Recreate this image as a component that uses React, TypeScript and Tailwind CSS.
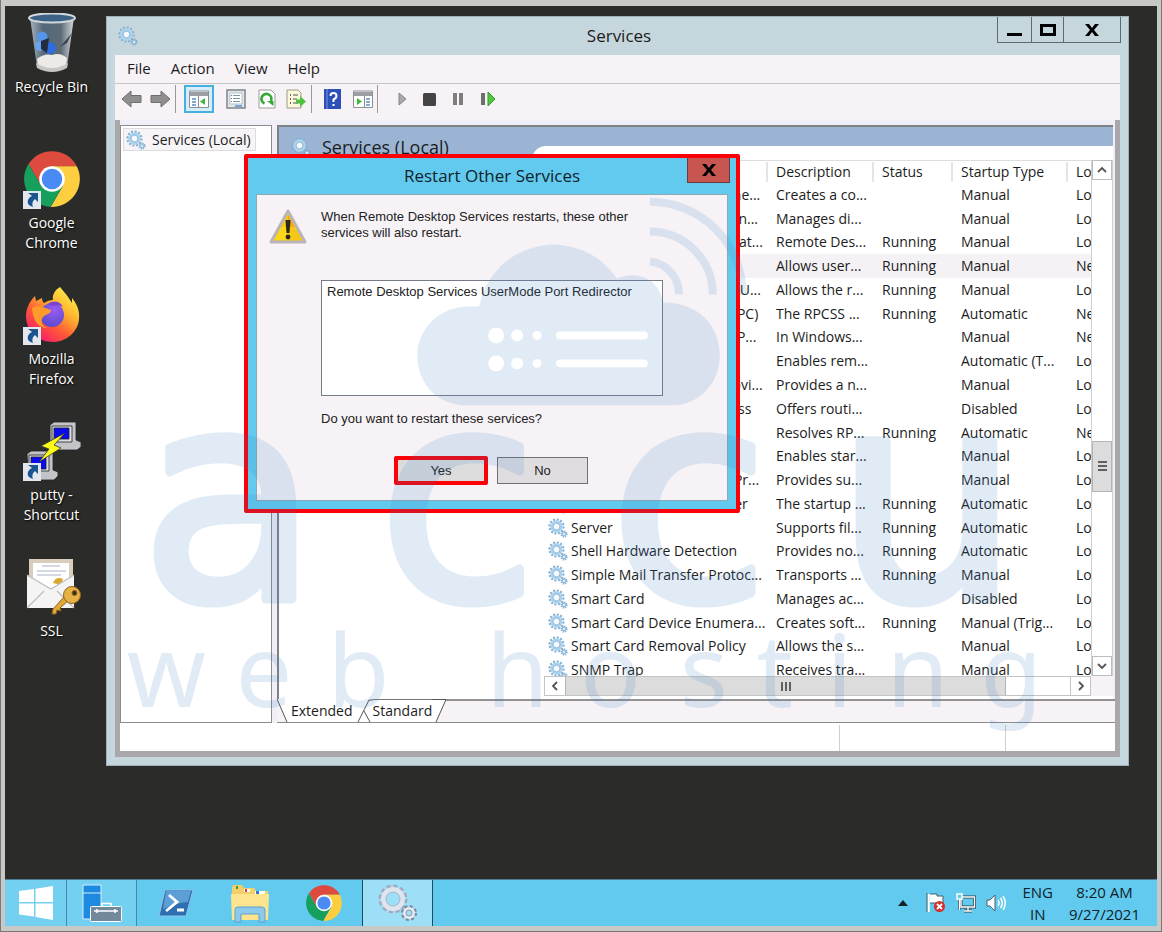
// Windows Server desktop with the Services console and the restart confirmation dialog

import React from 'react';

type ServiceRow = {
  name: string;
  description: string;
  status?: string;
  startup: string;
  logOn: string;
  selected?: boolean;
};

const services: ServiceRow[] = [
  { name: 'Remote Access Auto Conne...', description: 'Creates a co...', startup: 'Manual', logOn: 'Lo' },
  { name: 'Remote Access Connection...', description: 'Manages di...', startup: 'Manual', logOn: 'Lo' },
  { name: 'Remote Desktop Configurat...', description: 'Remote Des...', status: 'Running', startup: 'Manual', logOn: 'Lo' },
  { name: 'Remote Desktop Services', description: 'Allows user...', status: 'Running', startup: 'Manual', logOn: 'Ne', selected: true },
  { name: 'Remote Desktop Services U...', description: 'Allows the r...', status: 'Running', startup: 'Manual', logOn: 'Lo' },
  { name: 'Remote Procedure Call (RPC)', description: 'The RPCSS ...', status: 'Running', startup: 'Automatic', logOn: 'Ne' },
  { name: 'Remote Procedure Call (RP...', description: 'In Windows...', startup: 'Manual', logOn: 'Ne' },
  { name: 'Remote Registry', description: 'Enables rem...', startup: 'Automatic (T...', logOn: 'Lo' },
  { name: 'Resultant Set of Policy Provi...', description: 'Provides a n...', startup: 'Manual', logOn: 'Lo' },
  { name: 'Routing and Remote Access', description: 'Offers routi...', startup: 'Disabled', logOn: 'Lo' },
  { name: 'RPC Endpoint Mapper', description: 'Resolves RP...', status: 'Running', startup: 'Automatic', logOn: 'Ne' },
  { name: 'Secondary Logon', description: 'Enables star...', startup: 'Manual', logOn: 'Lo' },
  { name: 'Secure Socket Tunneling Pr...', description: 'Provides su...', startup: 'Manual', logOn: 'Lo' },
  { name: 'Security Accounts Manager', description: 'The startup ...', status: 'Running', startup: 'Automatic', logOn: 'Lo' },
  { name: 'Server', description: 'Supports fil...', status: 'Running', startup: 'Automatic', logOn: 'Lo' },
  { name: 'Shell Hardware Detection', description: 'Provides no...', status: 'Running', startup: 'Automatic', logOn: 'Lo' },
  { name: 'Simple Mail Transfer Protoc...', description: 'Transports ...', status: 'Running', startup: 'Manual', logOn: 'Lo' },
  { name: 'Smart Card', description: 'Manages ac...', startup: 'Disabled', logOn: 'Lo' },
  { name: 'Smart Card Device Enumera...', description: 'Creates soft...', status: 'Running', startup: 'Manual (Trig...', logOn: 'Lo' },
  { name: 'Smart Card Removal Policy', description: 'Allows the s...', startup: 'Manual', logOn: 'Lo' },
  { name: 'SNMP Trap', description: 'Receives tra...', startup: 'Manual', logOn: 'Lo' },
];

function GearIcon({ className = '' }: { className?: string }) {
  return (
    <svg viewBox="0 0 20 20" className={className} aria-hidden="true">
      <circle cx="8.5" cy="8.5" r="7" fill="none" stroke="#86afd0" strokeWidth="2.2" strokeDasharray="2 1.66" />
      <circle cx="8.5" cy="8.5" r="4.9" fill="none" stroke="#a9d3ee" strokeWidth="2.8" />
      <circle cx="8.5" cy="8.5" r="3.4" fill="#f4fafd" stroke="#7fa6c6" strokeWidth=".8" />
      <circle cx="16" cy="16" r="2.8" fill="none" stroke="#7ea4c4" strokeWidth="1.6" strokeDasharray="1.2 1" />
      <circle cx="16" cy="16" r="1.7" fill="#e6f3fa" stroke="#91bfe0" strokeWidth="1.2" />
    </svg>
  );
}

function ChromeIcon({ className = '' }: { className?: string }) {
  const sector = 'M24 13H45.3A24 24 0 0 0 3.9 11.1L14.5 29.5L24 24Z';
  return (
    <svg viewBox="0 0 48 48" className={className} aria-hidden="true">
      <path d={sector} fill="#dd4b3e" />
      <path d={sector} fill="#fdce3f" transform="rotate(120 24 24)" />
      <path d={sector} fill="#17a05d" transform="rotate(240 24 24)" />
      <circle cx="24" cy="24" r="11" fill="#fff" />
      <circle cx="24" cy="24" r="8.8" fill="#4a8af4" />
    </svg>
  );
}

function FirefoxIcon() {
  return (
    <svg viewBox="0 0 56 58" className="h-[58px] w-14" aria-hidden="true">
      <defs>
        <linearGradient id="ffBody" x1="0.85" y1="0.05" x2="0.2" y2="0.95">
          <stop offset="0" stopColor="#fff04a" />
          <stop offset=".35" stopColor="#ffb52e" />
          <stop offset=".65" stopColor="#ff5b35" />
          <stop offset="1" stopColor="#f5186d" />
        </linearGradient>
        <radialGradient id="ffGlobe" cx=".6" cy=".3" r=".8">
          <stop offset="0" stopColor="#9a5cf0" />
          <stop offset="1" stopColor="#5249c9" />
        </radialGradient>
      </defs>
      <path
        d="M36 1C40 6 43 9 46 14L48 17L48 12C53 18 56 25 55 33C54 46 42 56 29 56C14 56 2 45 2 30C2 23 5 16 11 10L12 15L18 12C18 15 19 16 20 17C23 15 26 14 29 14C28 9 31 4 36 1Z"
        fill="url(#ffBody)"
      />
      <circle cx="28" cy="29" r="12" fill="url(#ffGlobe)" />
      <path d="M8 22C14 18 20 22 27 24C27 28 22 28 19 31C16 35 18 40 23 42C14 42 9 34 8 22Z" fill="#ff9a2c" />
      <path d="M24 18C29 14 36 15 39 21C35 19 32 19 29 20Z" fill="#7b42d4" />
    </svg>
  );
}

function RecycleBinIcon() {
  return (
    <svg viewBox="0 0 56 60" className="h-[60px] w-14" aria-hidden="true">
      <defs>
        <linearGradient id="binGlass" x1="0" x2="1">
          <stop offset="0" stopColor="#a9b4bd" />
          <stop offset=".3" stopColor="#53687a" />
          <stop offset=".7" stopColor="#5d6b76" />
          <stop offset="1" stopColor="#d7dadc" />
        </linearGradient>
      </defs>
      <path d="M6 4L13 54Q28 62 43 54L50 4Z" fill="url(#binGlass)" />
      <ellipse cx="28" cy="5" rx="23" ry="4.5" fill="#3c6285" stroke="#d3d8db" strokeWidth="2" />
      <path d="M48 20L36 34L43 30Z" fill="#3b444c" />
      <g fill="#2f6be0">
        <circle cx="18" cy="24" r="5.5" fill="#5595e8" />
        <circle cx="16" cy="33" r="5" fill="#6aa3ee" />
        <circle cx="26" cy="35" r="6" />
      </g>
      <path d="M17 28L25 25L23 40L17 36Z" fill="#232d3d" />
      <path d="M13 46Q20 40 28 42Q36 39 43 45L42 54Q28 61 14 54Z" fill="#eceae6" />
      <path d="M12 50L13 55Q28 63 43 55L44 50Q28 60 12 50Z" fill="#c8c6c2" />
    </svg>
  );
}

function PuttyIcon() {
  return (
    <svg viewBox="0 0 58 60" className="h-[60px] w-[58px]" aria-hidden="true">
      <g stroke="#222" strokeWidth=".8">
        <path d="M27 4L31 1H53V19L58 21V26L54 29H29L27 24Z" fill="#c4c4c8" />
        <path d="M29 5H49V21H29Z" fill="#dcdce0" />
        <path d="M31 7H46V18H31Z" fill="#0b0bf0" />
        <path d="M4 33L8 30H30V49L35 51V55L31 59H6Z" fill="#c4c4c8" />
        <path d="M6 34H26V50H6Z" fill="#dcdce0" />
        <path d="M8 36H23V48H8Z" fill="#0b0bf0" />
      </g>
      <path d="M42 12L18 25L26 28L16 41L38 27L31 24Z" fill="#fbfb17" stroke="#333" strokeWidth=".8" />
    </svg>
  );
}

function SslIcon() {
  return (
    <svg viewBox="0 0 58 60" className="h-[60px] w-[58px]" aria-hidden="true">
      <path d="M6 2H50V30H6Z" fill="#d9cdbd" />
      <path d="M10 6H46V32H10Z" fill="#fff" />
      <path d="M19 9H37M14 14H43M14 18H38" stroke="#c6cbdc" strokeWidth="1.4" />
      <path d="M30 26Q33 19 40 22L38 28Z" fill="#d8a92d" />
      <path d="M4 18L28 32L51 18V51H4Z" fill="#f4f4f4" />
      <path d="M4 51L21 34M51 51L34 34M4 18L28 32L51 18" stroke="#bdbdbd" strokeWidth="1.2" fill="none" />
      <g stroke="#8d641a" strokeWidth="1">
        <path d="M42 39L46 43L37 51L38 54L34 53L33 57L29 57L30 52Z" fill="#e0a93a" />
        <circle cx="49" cy="38" r="8.5" fill="#e8b146" />
        <circle cx="51.5" cy="36" r="2.5" fill="#3a3020" />
      </g>
    </svg>
  );
}

function ShortcutArrow() {
  return (
    <svg viewBox="0 0 18 18" className="absolute bottom-0 left-0 size-[18px]" aria-hidden="true">
      <path d="M0 0H18V18H0Z" fill="#e3e8ee" />
      <path d="M5 2H15V11L12 8Q8 11 10 16Q3 14 5 9Q6 6 9 5Z" fill="#1c5590" />
    </svg>
  );
}

function DesktopIcon({ label, shortcut, children }: { label: string; shortcut?: boolean; children: React.ReactNode }) {
  return (
    <button type="button" className="flex h-[136px] w-full flex-col items-center text-sm leading-5 text-white">
      <span className="relative flex h-[60px] w-[58px] items-center justify-center">
        {children}
        {shortcut && <ShortcutArrow />}
      </span>
      <span className="mt-1 max-w-20 [text-shadow:1px_1px_2px_#000]">{label}</span>
    </button>
  );
}

function Toolbar() {
  return (
    <div className="flex h-9 items-center bg-[#f6f2f6] pb-1.5 pl-1.5">
      <button type="button" aria-label="Back" className="mr-2">
        <svg viewBox="0 0 21 18" className="h-[18px] w-[21px]">
          <path d="M1 9L10 1V5.5H20V12.5H10V17Z" fill="#8f8f8f" stroke="#6d6d6d" />
        </svg>
      </button>
      <button type="button" aria-label="Forward" className="mr-1">
        <svg viewBox="0 0 21 18" className="h-[18px] w-[21px]">
          <path d="M20 9L11 1V5.5H1V12.5H11V17Z" fill="#8f8f8f" stroke="#6d6d6d" />
        </svg>
      </button>
      <span className="mr-2 h-7 border-l border-[#9a9a9a]" />
      <button type="button" aria-label="Show or hide console tree" className="mr-3 flex h-7 w-[30px] items-center justify-center border-2 border-[#45b0de] bg-[#d5eefa]">
        <svg viewBox="0 0 20 18" className="h-[18px] w-5">
          <path d="M.5 1H19.5V17.5H.5Z" fill="#fff" stroke="#8a8f94" />
          <path d="M1 2H19V6H1Z" fill="#9b9fa3" />
          <path d="M9.5 6V17" stroke="#8a8f94" />
          <path d="M3 9H7M3 12H7M3 15H7" stroke="#5d8fc4" strokeWidth="1.5" />
          <path d="M16 8V15L11 11.5Z" fill="#3fb93b" />
        </svg>
      </button>
      <button type="button" aria-label="Properties" className="mr-3">
        <svg viewBox="0 0 20 20" className="size-5">
          <path d="M1 1H19V19H1Z" fill="#e4e7ea" stroke="#7e858c" strokeWidth="1.5" />
          <path d="M4 4H16V15H4Z" fill="#fff" stroke="#b7c0c9" />
          <path d="M5 6.5H6M5 9.5H6M5 12.5H6" stroke="#4f7fb4" />
          <path d="M7 6.5H14M7 9.5H14M7 12.5H14" stroke="#8094a8" />
          <path d="M9 17H16" stroke="#5592d0" strokeWidth="1.5" />
        </svg>
      </button>
      <button type="button" aria-label="Refresh" className="mr-2.5">
        <svg viewBox="0 0 18 20" className="h-5 w-[18px]">
          <path d="M1 1H13L17 5V19H1Z" fill="#fff" stroke="#9a9a9a" />
          <path d="M6.5 14.5A5 5 0 1 1 13 12" fill="none" stroke="#35a836" strokeWidth="2.6" />
          <path d="M9 12H15.5V17Z" fill="#35a836" />
        </svg>
      </button>
      <button type="button" aria-label="Export list" className="mr-[5px]">
        <svg viewBox="0 0 20 20" className="size-5">
          <path d="M1 1H12L15 4V19H1Z" fill="#fdf8da" stroke="#9a9a8a" />
          <path d="M4 6H5M4 10H5M4 14H5" stroke="#333" strokeWidth="1.5" />
          <path d="M7 6H12M7 10H11M7 14H12" stroke="#8b8b8b" strokeWidth="1.5" />
          <path d="M10 10.5H14V7L20 12.5L14 18V14.5H10Z" fill="#4cc23e" />
        </svg>
      </button>
      <span className="mr-3 h-7 border-l border-[#9a9a9a]" />
      <button type="button" aria-label="Help" className="mr-3">
        <svg viewBox="0 0 17 20" className="h-5 w-[17px]">
          <path d="M0 0H17V20H0Z" fill="#2c50b8" />
          <path d="M3 0V20" stroke="#7a98e4" />
          <path d="M6.5 7Q6.5 4 9.5 4T12.5 7Q12.5 9 9.5 10.5V13M9.5 15V17" fill="none" stroke="#fff" strokeWidth="2" />
        </svg>
      </button>
      <button type="button" aria-label="Show or hide action pane" className="mr-1">
        <svg viewBox="0 0 20 18" className="h-[18px] w-5">
          <path d="M.5 1H19.5V17.5H.5Z" fill="#fff" stroke="#8a8f94" />
          <path d="M1 2H19V6H1Z" fill="#9b9fa3" />
          <path d="M11.5 6V17" stroke="#8a8f94" />
          <path d="M13 9H17M13 12H17M13 15H17" stroke="#5d8fc4" strokeWidth="1.5" />
          <path d="M4 8V15L9 11.5Z" fill="#3fb93b" />
        </svg>
      </button>
      <span className="mr-5 h-7 border-l border-[#9a9a9a]" />
      <button type="button" aria-label="Start service" className="mr-4">
        <svg viewBox="0 0 9 14" className="h-3.5 w-[9px]">
          <path d="M1 1L8 7L1 13Z" fill="#a9a9a9" stroke="#868686" />
        </svg>
      </button>
      <button type="button" aria-label="Stop service" className="mr-[17px]">
        <svg viewBox="0 0 13 13" className="size-[13px]">
          <rect width="13" height="13" rx="1.5" fill="#444" />
        </svg>
      </button>
      <button type="button" aria-label="Pause service" className="mr-[17px]">
        <svg viewBox="0 0 11 14" className="h-3.5 w-[11px]">
          <path d="M0 1H4V13H0ZM6 1H10V13H6Z" fill="#7e7e7e" />
        </svg>
      </button>
      <button type="button" aria-label="Restart service">
        <svg viewBox="0 0 15 14" className="h-3.5 w-[15px]">
          <path d="M0 1H4V13H0Z" fill="#6e6e6e" />
          <path d="M7 0L14 7L7 14Z" fill="#4fca3f" stroke="#2f9b2b" />
        </svg>
      </button>
    </div>
  );
}

function ServicesTable() {
  const head = 'border-r-2 border-[#e4e4e4] pl-2 text-left font-normal whitespace-nowrap';
  const cell = 'overflow-hidden pl-2 whitespace-nowrap';
  const columns = 'grid grid-cols-[minmax(0,1fr)_106px_79px_115px_23px] items-center';
  return (
    <table className="flex h-[calc(100%+6px)] w-full flex-col bg-white">
      <thead className="block border-t border-[#dedede]">
        <tr className={`${columns} h-[22px]`}>
          <th className={head}>Name</th>
          <th className={head}>Description</th>
          <th className={head}>Status</th>
          <th className={head}>Startup Type</th>
          <th className="pl-2 text-left font-normal">Lo</th>
        </tr>
      </thead>
      <tbody className="flex min-h-0 flex-1 flex-col">
        {services.map((service) => (
          <tr key={service.name} className={`${columns} min-h-0 flex-1 ${service.selected ? 'bg-[#f5f2f6]' : ''}`}>
            <td className="flex items-center overflow-hidden pl-1 whitespace-nowrap">
              <GearIcon className="mr-[3px] size-5 shrink-0" />
              {service.name}
            </td>
            <td className={cell}>{service.description}</td>
            <td className={cell}>{service.status}</td>
            <td className={cell}>{service.startup}</td>
            <td className={cell}>{service.logOn}</td>
          </tr>
        ))}
      </tbody>
    </table>
  );
}

function Chevron({ d }: { d: string }) {
  return (
    <svg viewBox="0 0 10 10" className="size-2.5" aria-hidden="true">
      <path d={d} fill="none" stroke="#555" strokeWidth="1.8" />
    </svg>
  );
}

function ListView() {
  const arrow = 'flex h-5 w-full items-center justify-center border border-[#bdbdbd] bg-white';
  return (
    <div className="grid min-h-0 min-w-0 flex-1 grid-cols-[minmax(0,1fr)_22px] grid-rows-[minmax(0,1fr)_20px] pb-[3px]">
      <div className="overflow-hidden">
        <ServicesTable />
      </div>
      <div className="flex flex-col border-x border-[#d0d0d0] bg-white">
        <button type="button" aria-label="Scroll up" className={arrow}>
          <Chevron d="M1 7L5 3L9 7" />
        </button>
        <div className="flex-[262]" />
        <div className="flex h-[51px] flex-col items-center justify-center gap-0.5 border border-[#b4b4b4] bg-[#dcdcdc]">
          <span className="h-0.5 w-[9px] bg-[#606060]" />
          <span className="h-0.5 w-[9px] bg-[#606060]" />
          <span className="h-0.5 w-[9px] bg-[#606060]" />
        </div>
        <div className="flex-[165]" />
        <button type="button" aria-label="Scroll down" className={arrow}>
          <Chevron d="M1 3L5 7L9 3" />
        </button>
      </div>
      <div className="flex border border-[#c4c4c4] bg-white">
        <button type="button" aria-label="Scroll left" className="flex w-5 items-center justify-center">
          <Chevron d="M7 1L3 5L7 9" />
        </button>
        <div className="flex flex-[442] items-center justify-center gap-0.5 border-x border-[#b4b4b4] bg-[#dcdcdc]">
          <span className="h-[9px] w-0.5 bg-[#606060]" />
          <span className="h-[9px] w-0.5 bg-[#606060]" />
          <span className="h-[9px] w-0.5 bg-[#606060]" />
        </div>
        <div className="flex-[64]" />
        <button type="button" aria-label="Scroll right" className="flex w-5 items-center justify-center border-l border-[#c4c4c4]">
          <Chevron d="M3 1L7 5L3 9" />
        </button>
      </div>
      <div className="bg-[#f6f2f6]" />
    </div>
  );
}

function ViewTabs() {
  return (
    <div className="flex h-6 border-b border-[#8c8c8c] bg-[#f6f2f6]">
      <svg viewBox="0 0 14 23" className="h-[23px] w-3.5" aria-hidden="true">
        <path d="M0 0H14V23H10Z" fill="#fff" />
        <path d="M0 0L10 23" stroke="#555" />
      </svg>
      <button type="button" className="bg-white pt-px">Extended</button>
      <svg viewBox="0 0 20 23" className="h-[23px] w-5" aria-hidden="true">
        <path d="M0 0H20V23H0Z" fill="#fff" />
        <path d="M5 23L16 1H20M11 12L17 23" fill="none" stroke="#555" />
      </svg>
      <button type="button" className="border-t border-[#777] bg-white">Standard</button>
      <svg viewBox="0 0 14 23" className="h-[23px] w-3.5" aria-hidden="true">
        <path d="M0 0H14L4 23H0Z" fill="#fff" />
        <path d="M0 .5H14L4 23" fill="none" stroke="#555" />
      </svg>
      <div className="flex-1 border-t-2 border-[#929292]" />
    </div>
  );
}

function CloseGlyph() {
  return (
    <svg viewBox="0 0 14 12" className="h-3 w-3.5" aria-hidden="true">
      <path d="M0 0H4L7 4L10 0H14L9 6L14 12H10L7 8L4 12H0L5 6Z" fill="#000" />
    </svg>
  );
}

function RestartDialog() {
  return (
    <div
      role="dialog"
      aria-labelledby="dialogTitle"
      className="absolute top-[137px] left-[137px] flex h-[359px] w-[496px] flex-col rounded-xs border-4 border-[#fb0007] bg-[#62caee] px-2 pb-2"
    >
      <div className="relative flex h-9 items-center justify-center">
        <h2 id="dialogTitle" className="text-[17px] text-[#10232b]">Restart Other Services</h2>
        <button type="button" aria-label="Close dialog" className="absolute top-0 -right-0.5 flex h-[25px] w-[43px] items-center justify-center border border-t-0 border-[#6b3b3f] bg-[#c75650]">
          <CloseGlyph />
        </button>
      </div>
      <div className="flex flex-1 border border-[#8fa9b4] bg-[#f6f2f6] pt-3.5 pl-3 font-['Liberation_Sans',Arial,sans-serif] text-[13px] leading-4 text-[#222]">
        <svg viewBox="0 0 38 36" className="mr-3.5 h-9 w-[38px] shrink-0" aria-hidden="true">
          <path d="M19 2L36 33H2Z" fill="#f8c913" stroke="#b9b4ba" strokeWidth="3" strokeLinejoin="round" />
          <path d="M19 6L33 31H19Z" fill="#f2a90f" />
          <path d="M19 4L33 31H5L12 18H26Z" fill="#fbe51f" opacity=".5" />
          <path d="M16.5 11H21.5L20.5 24H17.5Z" fill="#2a2620" />
          <circle cx="19" cy="28" r="2.4" fill="#2a2620" />
        </svg>
        <div className="w-[342px]">
          <p className="max-w-[330px]">When Remote Desktop Services restarts, these other services will also restart.</p>
          <ul className="mt-[39px] h-[116px] border border-[#767c86] bg-white px-[5px] py-[3px]">
            <li className="whitespace-nowrap">Remote Desktop Services UserMode Port Redirector</li>
          </ul>
          <p className="mt-[15px]">Do you want to restart these services?</p>
          <div className="mt-[29px] ml-[73px] flex items-center gap-[9px]">
            <button type="button" className="h-[29px] w-[94px] rounded-xs border-4 border-[#fb0007] bg-[#dcdcdc]">Yes</button>
            <button type="button" className="h-[27px] w-[91px] border border-[#707070] bg-[#dfdddf]">No</button>
          </div>
        </div>
      </div>
    </div>
  );
}

function ServicesWindow() {
  return (
    <section className="relative mr-7 mb-[113px] flex min-w-0 flex-1 flex-col border border-[#9fb0b8] bg-[#c6d6dd] px-2 pb-2 text-sm text-[#1c1c1c]">
      <header className="flex h-[38px] items-center">
        <div className="flex-1 pl-[3px]">
          <GearIcon className="size-5" />
        </div>
        <h1 className="text-[17px]">Services</h1>
        <div className="flex flex-1 items-start justify-end self-stretch">
          <div className="-mr-px flex h-[26px] divide-x divide-[#5c6b72] border border-t-0 border-[#5c6b72]">
            <button type="button" aria-label="Minimize" className="flex w-[34px] items-center justify-center pt-2.5">
              <span className="h-[3px] w-[15px] bg-black" />
            </button>
            <button type="button" aria-label="Maximize" className="flex w-8 items-center justify-center">
              <span className="h-3 w-4 border-3 border-black" />
            </button>
            <button type="button" aria-label="Close" className="flex w-[56px] items-center justify-center">
              <CloseGlyph />
            </button>
          </div>
        </div>
      </header>
      <nav className="flex h-[29px] items-center gap-5 border-b border-[#c5c5c5] bg-[#f6f2f6] pl-3 text-[15px]">
        <button type="button">File</button>
        <button type="button">Action</button>
        <button type="button">View</button>
        <button type="button">Help</button>
      </nav>
      <Toolbar />
      <div className="flex min-h-0 flex-1 flex-col border-x-[5px] border-b-[6px] border-[#a9a7a9] bg-[#f0eef6] pt-[5px]">
        <div className="flex min-h-0 flex-1">
          <aside className="mr-[5px] w-[152px] border border-[#8c8c8c] bg-white p-0.5">
            <button type="button" className="flex h-[23px] items-center border border-[#dcdcdc] bg-[#f7f4f7] pr-1 pl-0.5">
              <GearIcon className="mr-1.5 size-5" />
              Services (Local)
            </button>
          </aside>
          <div className="flex min-w-0 flex-1 flex-col">
            <div className="mr-0.5 flex min-h-0 flex-1 flex-col border-t-2 border-l-2 border-[#7f8183] bg-white">
              <div className="flex h-[33px] bg-[#9bb4d4]">
                <div className="flex w-[253px] items-center pt-1.5 pl-3 text-lg whitespace-nowrap">
                  <GearIcon className="mr-[11px] size-5" />
                  Services (Local)
                </div>
                <div className="mt-[19px] flex-1 rounded-tl-[14px] bg-white" />
              </div>
              <div className="flex min-h-0 flex-1">
                <div className="w-[265px]" />
                <ListView />
              </div>
            </div>
            <ViewTabs />
          </div>
        </div>
        <footer className="flex h-7 bg-white">
          <div className="flex-1" />
          <div className="mt-0.5 w-[166px] border-l border-[#cfcfcf]" />
          <div className="mt-0.5 w-[110px] border-l border-[#cfcfcf]" />
        </footer>
      </div>
      <RestartDialog />
    </section>
  );
}

function Taskbar() {
  const item = 'flex w-[71px] items-center justify-center';
  return (
    <footer className="flex h-[47px] border-t border-[#4e7f93] bg-[#62caee] text-[#10232b]">
      <button type="button" aria-label="Start" className="flex w-[61px] items-center justify-center bg-[#74d0f0]">
        <svg viewBox="0 0 34 34" className="size-[34px]">
          <path d="M0 5L15 3V16H0ZM16.500 2.700L34 0V16H16.500ZM0 17.500H15V30.500L0 28.500ZM16.500 17.500H34V34L16.500 31Z" fill="#fff" />
        </svg>
      </button>
      <div className="flex flex-1 gap-[3px]">
        <button type="button" aria-label="Server Manager" className={`${item} border-x border-[#3f8ba8] bg-[#74d0f0]`}>
          <svg viewBox="0 0 40 38" className="h-[38px] w-10">
            <path d="M1 1H19V35H1Z" fill="#1c8ae0" stroke="#d6effa" />
            <path d="M1 9H19" stroke="#d6effa" />
            <path d="M20 22V19.5H29V22" fill="none" stroke="#fff" strokeWidth="1.5" />
            <rect x="8.5" y="22.5" width="31" height="15" rx="1" fill="#72899c" stroke="#fff" />
            <path d="M12 27H36M15 25V29M33 25V29" stroke="#fff" strokeWidth="1.5" />
          </svg>
        </button>
        <button type="button" aria-label="PowerShell" className={item}>
          <svg viewBox="0 0 36 28" className="h-7 w-9">
            <path d="M7 1H35L28 27H1Z" fill="#2d6fb0" stroke="#8fc3e6" />
            <path d="M8 2H33L30 13Q18 14 5 20Z" fill="#5c9fd6" />
            <path d="M11 6L19 13L8 22M19 21H26" fill="none" stroke="#fff" strokeWidth="2.8" />
          </svg>
        </button>
        <button type="button" aria-label="File Explorer" className={item}>
          <svg viewBox="0 0 40 40" className="size-10">
            <path d="M2 5Q2 2 5 2H12L14 5H24L26 8H38V37H2Z" fill="#f2cf68" />
            <path d="M14 6H20V9H14ZM25 8H35V11H25Z" fill="#fff" />
            <path d="M6 3H8V6H6Z" fill="#3b9b46" />
            <path d="M15 6H17V9H15Z" fill="#d4432f" />
            <path d="M26 8H29V11H26Z" fill="#2f7bd0" />
            <path d="M1 11H39L38 37H2Z" fill="#fce48e" />
            <path d="M5 39V27Q5 24 8 24H32Q35 24 35 27V39H29V31H11V39Z" fill="#8dc9ea" stroke="#5ba3cf" />
          </svg>
        </button>
        <button type="button" aria-label="Google Chrome" className={item}>
          <ChromeIcon className="size-9" />
        </button>
        <button type="button" aria-label="Services" className={`${item} border-x border-[#1f4a5c] bg-[#9cdff7]`}>
          <svg viewBox="0 0 40 38" className="h-[38px] w-10">
            <circle cx="15" cy="15" r="12.5" fill="none" stroke="#a6a9bd" strokeWidth="4" strokeDasharray="4 2.54" />
            <circle cx="15" cy="15" r="9.5" fill="none" stroke="#dfe5ee" strokeWidth="5" />
            <circle cx="15" cy="15" r="7" fill="none" stroke="#a9b1c6" />
            <circle cx="31" cy="29" r="6.5" fill="none" stroke="#7f8499" strokeWidth="3" strokeDasharray="2.8 2.3" />
            <circle cx="31" cy="29" r="4.5" fill="none" stroke="#e6eaf2" strokeWidth="3" />
            <circle cx="31" cy="29" r="3" fill="none" stroke="#7f8499" strokeWidth=".8" />
          </svg>
        </button>
      </div>
      <div className="flex items-center pr-[17px]">
        <button type="button" aria-label="Show hidden icons" className="mr-[18px]">
          <svg viewBox="0 0 10 6" className="h-1.5 w-2.5">
            <path d="M0 6L5 0L10 6Z" fill="#10232b" />
          </svg>
        </button>
        <svg viewBox="0 0 20 22" className="mr-2.5 h-[22px] w-5" aria-label="Action Center">
          <path d="M2.5 2V20" stroke="#fff" strokeWidth="2.5" />
          <path d="M1 1V20M4 2H11V4H17V13H10V11H4" fill="#fff" stroke="#44606b" />
          <circle cx="13.5" cy="14.5" r="5.5" fill="#d62f2f" />
          <path d="M11 12L16 17M16 12L11 17" stroke="#fff" strokeWidth="1.8" />
        </svg>
        <svg viewBox="0 0 20 20" className="mr-2.5 size-5" aria-label="Network">
          <path d="M5 4H18.5V14H5ZM12 14V18M8 18H16M3.5 6V17" fill="none" stroke="#2b4550" strokeWidth="3" />
          <path d="M5 4H18.5V14H5ZM12 14V18M8 18H16" fill="none" stroke="#fff" strokeWidth="1.4" />
          <path d="M1 1H6V6H1ZM3.5 6V17" fill="#62caee" stroke="#fff" strokeWidth="1.5" />
        </svg>
        <svg viewBox="0 0 20 20" className="mr-4 size-5" aria-label="Volume">
          <path d="M1 7H4L9 2V18L4 13H1Z" fill="#fff" stroke="#44606b" />
          <path d="M12 7Q14 10 12 13M14.5 5Q18 10 14.5 15M17 3Q21.5 10 17 17" fill="none" stroke="#fff" strokeWidth="1.5" />
        </svg>
        <button type="button" className="mr-4 text-[15px] leading-[22px]">
          ENG
          <br />
          IN
        </button>
        <button type="button" className="text-[15px] leading-[22px]">
          8:20 AM
          <br />
          9/27/2021
        </button>
      </div>
    </footer>
  );
}

// Translucent hosting brand laid over the whole screen
function Watermark() {
  return (
    <svg viewBox="0 0 1162 932" className="pointer-events-none absolute top-0 left-0 w-full" aria-hidden="true">
      <g opacity=".15" fill="#3c82c8">
        <path d="M467 406C435 406 417 382 417 356C417 329 440 307 468 307H479A76 76 0 0 1 617 279C645 268 661 286 663 303C700 303 720 327 720 356C720 385 698 406 672 406Z" />
        <path d="M650 202A93 93 0 0 1 743 295M650 232A63 63 0 0 1 713 295M650 262A32 32 0 0 1 679 295" fill="none" stroke="#3c82c8" strokeWidth="8" />
        <text x="140 378 610 836" y="600" fontSize="290" fontFamily="DejaVu Sans, sans-serif" stroke="#3c82c8" strokeWidth="9" strokeLinejoin="round">accu</text>
        <text x="126 235 327 410 486 580 680 757 827 887 981" y="708" fontSize="101" fontFamily="Noto Sans, sans-serif">web hosting</text>
      </g>
      <g fill="#fff">
        <circle cx="496" cy="336" r="8" />
        <circle cx="517" cy="336" r="6" />
        <circle cx="537" cy="336" r="4.5" />
        <circle cx="496" cy="364" r="8" />
        <circle cx="517" cy="364" r="6" />
        <circle cx="537" cy="364" r="4.5" />
        <path d="M560 336H644M560 364H644" stroke="#fff" strokeWidth="8" strokeLinecap="round" />
      </g>
    </svg>
  );
}

export default function App() {
  return (
    <div className="relative flex min-h-screen flex-col border-r border-b border-l border-[#777] bg-[#c8c8c6] px-1 pt-1.5 pb-[5px] font-['Open_Sans','Segoe_UI',sans-serif]">
      <main className="flex flex-1 bg-[#2b2c2a] pt-2.5">
        <div className="-mt-[3px] w-[101px] pr-2">
          <DesktopIcon label="Recycle Bin"><RecycleBinIcon /></DesktopIcon>
          <DesktopIcon label="Google Chrome" shortcut><ChromeIcon className="size-14" /></DesktopIcon>
          <DesktopIcon label="Mozilla Firefox" shortcut><FirefoxIcon /></DesktopIcon>
          <DesktopIcon label="putty - Shortcut" shortcut><PuttyIcon /></DesktopIcon>
          <DesktopIcon label="SSL"><SslIcon /></DesktopIcon>
        </div>
        <ServicesWindow />
      </main>
      <Taskbar />
      <Watermark />
    </div>
  );
}
